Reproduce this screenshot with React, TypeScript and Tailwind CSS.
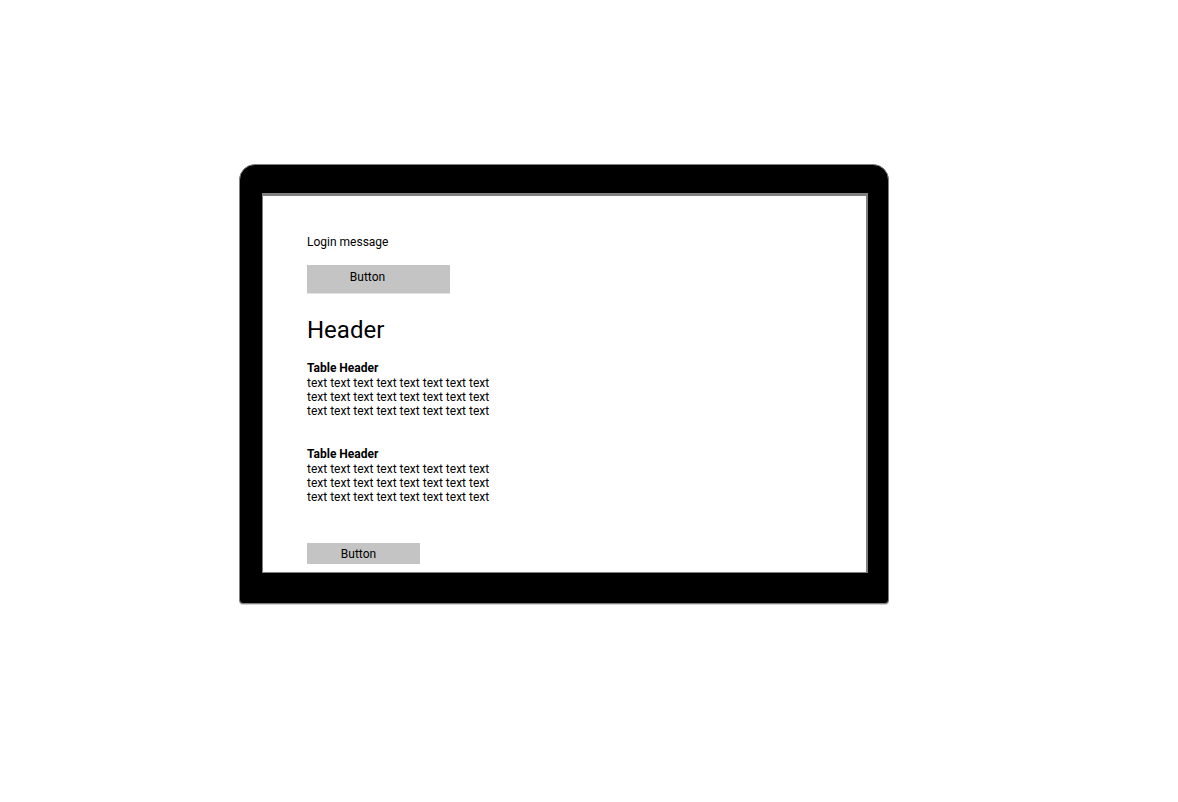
const line = "text text text text text text text text";

function TextTable({ className }: { className: string }) {
  return (
    <table className={`border-collapse text-left ${className}`}>
      <thead>
        <tr>
          <th className="p-0 pb-px text-[12px] leading-[14px] font-bold">Table Header</th>
        </tr>
      </thead>
      <tbody>
        {[0, 1, 2].map((row) => (
          <tr key={row}>
            <td className="p-0 text-[12px] leading-[14px]">{line}</td>
          </tr>
        ))}
      </tbody>
    </table>
  );
}

export default function App() {
  return (
    <main className="min-h-screen bg-white pt-[164px] pr-[289px] pb-10 pl-[239px] font-['Roboto',sans-serif] text-black antialiased">
      <div className="rounded-t-[16px] rounded-b-[4px] border border-[#808080] bg-black pt-7 pr-5 pb-[30px] pl-[22px] shadow-[0_1px_0_#d0d0d0]">
        <section className="flex flex-col items-start border border-t-[3px] border-r-2 border-[#808080] bg-white pt-[39px] pb-2 pl-11 text-[12px] leading-[14px]">
          <p>Login message</p>
          <button className="mt-4 h-7 w-[143px] bg-[#c4c4c4] pr-[22px] pb-1 shadow-[0_1px_0_#e2e2e2]">Button</button>
          <h1 className="mt-[23px] text-[24px] leading-[28px]">Header</h1>
          <TextTable className="mt-[17px]" />
          <TextTable className="mt-[29px]" />
          <button className="mt-[39px] h-[21px] w-[113px] bg-[#c4c4c4] pr-[10px]">Button</button>
        </section>
      </div>
    </main>
  );
}
